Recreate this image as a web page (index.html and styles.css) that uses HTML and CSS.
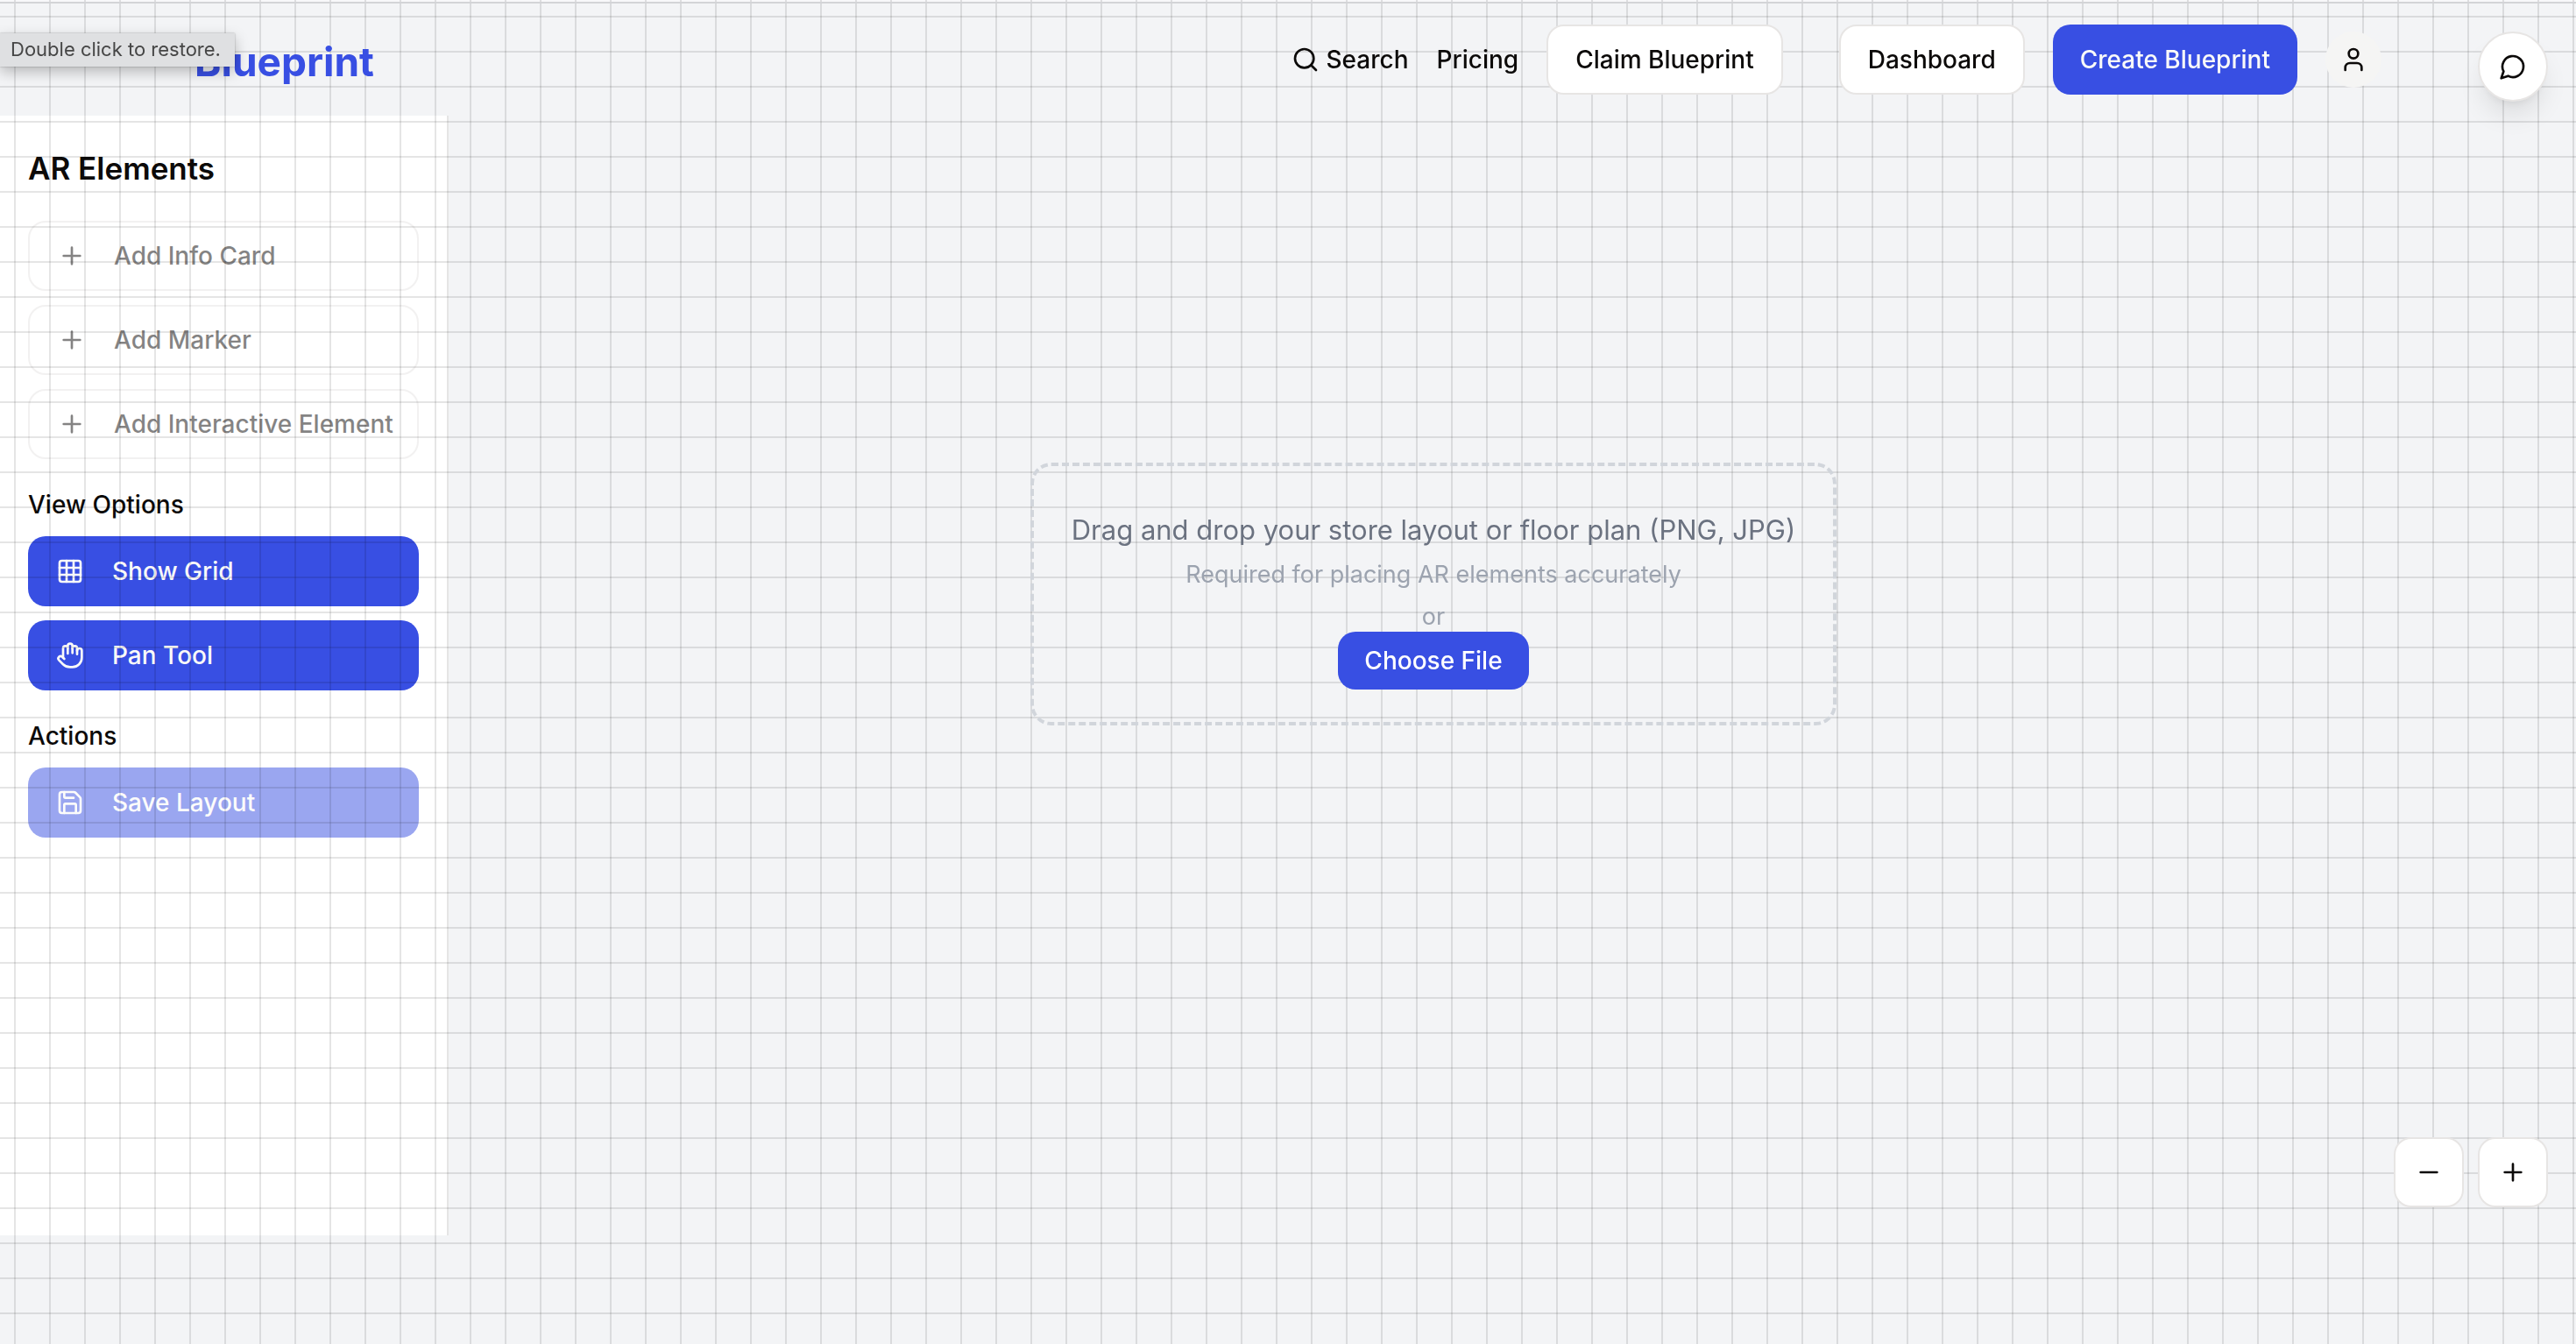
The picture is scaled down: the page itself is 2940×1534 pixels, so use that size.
FILE: index.html
```html
<!DOCTYPE html>
<html lang="en">
<head>
<meta charset="utf-8">
<meta name="viewport" content="width=device-width, initial-scale=1">
<title>Blueprint</title>
<link rel="stylesheet" href="styles.css">
</head>
<body>
<svg width="0" height="0" class="sprite" aria-hidden="true">
  <symbol id="plus" viewBox="0 0 24 24"><path d="M5 12h14M12 5v14"/></symbol>
  <symbol id="minus" viewBox="0 0 24 24"><path d="M5 12h14"/></symbol>
  <symbol id="search" viewBox="0 0 24 24"><circle cx="11" cy="11" r="8"/><path d="m21 21-4.300-4.300"/></symbol>
  <symbol id="user" viewBox="0 0 24 24"><path d="M19 21v-2a4 4 0 0 0-4-4H9a4 4 0 0 0-4 4v2"/><circle cx="12" cy="7" r="4"/></symbol>
  <symbol id="chat" viewBox="0 0 24 24"><path d="M7.900 20A9 9 0 1 0 4 16.100L2 22Z"/></symbol>
  <symbol id="grid" viewBox="0 0 24 24"><rect width="18" height="18" x="3" y="3" rx="2"/><path d="M3 9h18M3 15h18M9 3v18M15 3v18"/></symbol>
  <symbol id="hand" viewBox="0 0 24 24"><path d="M18 11V6a2 2 0 0 0-4 0"/><path d="M14 10V4a2 2 0 0 0-4 0v2"/><path d="M10 10.500V6a2 2 0 0 0-4 0v8"/><path d="M18 8a2 2 0 1 1 4 0v6a8 8 0 0 1-8 8h-2c-2.800 0-4.500-.860-5.990-2.340l-3.600-3.600a2 2 0 0 1 2.830-2.820L7 15"/></symbol>
  <symbol id="save" viewBox="0 0 24 24"><path d="M15.200 3a2 2 0 0 1 1.400.6l3.800 3.800a2 2 0 0 1 .6 1.400V19a2 2 0 0 1-2 2H5a2 2 0 0 1-2-2V5a2 2 0 0 1 2-2z"/><path d="M17 21v-7a1 1 0 0 0-1-1H8a1 1 0 0 0-1 1v7"/><path d="M7 3v4a1 1 0 0 0 1 1h7"/></symbol>
</svg>

<header class="header">
  <div class="header-inner">
    <a class="logo" href="#">Blueprint</a>
    <nav class="nav">
      <a class="nav-link" href="#"><svg class="icon"><use href="#search"/></svg>Search</a>
      <a class="nav-link" href="#">Pricing</a>
      <button class="btn btn-outline claim" type="button">Claim Blueprint</button>
      <button class="btn btn-outline" type="button">Dashboard</button>
      <button class="btn btn-primary" type="button">Create Blueprint</button>
      <button class="avatar" type="button" aria-label="Account"><svg class="icon"><use href="#user"/></svg></button>
    </nav>
  </div>
</header>

<div class="workspace">
  <aside class="sidebar">
    <section class="group">
      <h2 class="title">AR Elements</h2>
      <button class="btn btn-outline tool" type="button" disabled><svg class="icon"><use href="#plus"/></svg>Add Info Card</button>
      <button class="btn btn-outline tool" type="button" disabled><svg class="icon"><use href="#plus"/></svg>Add Marker</button>
      <button class="btn btn-outline tool" type="button" disabled><svg class="icon"><use href="#plus"/></svg>Add Interactive Element</button>
    </section>
    <section class="group">
      <h3 class="subtitle">View Options</h3>
      <button class="btn btn-primary tool" type="button"><svg class="icon"><use href="#grid"/></svg>Show Grid</button>
      <button class="btn btn-primary tool" type="button"><svg class="icon"><use href="#hand"/></svg>Pan Tool</button>
    </section>
    <section class="group">
      <h3 class="subtitle">Actions</h3>
      <button class="btn btn-primary tool" type="button" disabled><svg class="icon"><use href="#save"/></svg>Save Layout</button>
    </section>
  </aside>

  <main class="canvas">
    <div class="dropzone">
      <p class="drop-title">Drag and drop your store layout or floor plan (PNG, JPG)</p>
      <p class="drop-note">Required for placing AR elements accurately</p>
      <p class="drop-note">or</p>
      <div class="drop-action">
        <label class="choose" for="layout-file">Choose File</label>
        <input id="layout-file" type="file" accept="image/png,image/jpeg" hidden>
      </div>
    </div>
    <div class="zoom">
      <button class="btn btn-outline btn-icon" type="button" aria-label="Zoom out"><svg class="icon"><use href="#minus"/></svg></button>
      <button class="btn btn-outline btn-icon" type="button" aria-label="Zoom in"><svg class="icon"><use href="#plus"/></svg></button>
    </div>
  </main>
</div>

<div class="grid-overlay" aria-hidden="true"></div>
<button class="chat" type="button" aria-label="Open chat"><svg class="icon"><use href="#chat"/></svg></button>
<div class="tooltip" role="tooltip">Double click to restore.</div>
</body>
</html>
```
FILE: styles.css
```css
:root {
  --primary: #384fe3;
  --ink: #0c0a09;
  --line: #e7e5e4;
  --surface: #f3f4f6;
}

* { box-sizing: border-box; }

body {
  margin: 0;
  min-height: 100vh;
  background: var(--surface);
  border-top: 2px solid #f8f8fa;
  color: var(--ink);
  font: 400 28px/40px Inter, "Liberation Sans", sans-serif;
  display: flex;
  flex-direction: column;
}

h2, h3, p { margin: 0; }
button { font: inherit; color: inherit; cursor: pointer; }
a { color: inherit; text-decoration: none; }

.sprite { position: absolute; }

.icon {
  width: 32px;
  height: 32px;
  flex: none;
  fill: none;
  stroke: currentColor;
  stroke-width: 2;
  stroke-linecap: round;
  stroke-linejoin: round;
}

/* Header */
.header {
  position: relative;
  z-index: 2;
  border-top: 2px solid #d3d4d7;
}

.header-inner {
  max-width: 2560px;
  height: 128px;
  margin: 0 auto;
  padding: 0 32px;
  display: flex;
  align-items: center;
  justify-content: space-between;
}

.logo {
  padding-top: 4px;
  color: var(--primary);
  font-size: 46px;
  font-weight: 700;
  line-height: 64px;
}

.nav {
  display: flex;
  align-items: center;
  gap: 32px;
  font-weight: 500;
}

.nav .btn { padding: 0 31px; }

.nav-link {
  display: flex;
  align-items: center;
  gap: 8px;
}

.claim { margin-right: 32px; }

/* Buttons */
.btn {
  height: 80px;
  padding: 0 32px;
  border: 0;
  border-radius: 20px;
  font-weight: 500;
  white-space: nowrap;
}

.btn:disabled { opacity: 0.5; cursor: default; }

.btn-outline {
  background: #fff;
  border: 2px solid var(--line);
}

.btn-primary {
  background: var(--primary);
  color: #fafaf9;
}

.btn-icon {
  width: 80px;
  padding: 0;
  display: grid;
  place-items: center;
}

.avatar {
  width: 64px;
  height: 64px;
  padding: 0;
  border: 0;
  border-radius: 50%;
  background: #f5f5f4;
  display: grid;
  place-items: center;
}

/* Workspace */
.workspace {
  height: calc(100vh - 256px);
  min-height: 900px;
  display: flex;
}

.sidebar {
  width: 512px;
  flex: none;
  padding: 32px;
  background: #fff;
  border-right: 2px solid #e5e5e5;
  display: flex;
  flex-direction: column;
  gap: 32px;
}

.group {
  display: flex;
  flex-direction: column;
  gap: 16px;
}

.title {
  margin-bottom: 16px;
  font-size: 35px;
  font-weight: 600;
  line-height: 56px;
}

.subtitle {
  font-size: 28px;
  font-weight: 500;
}

.tool {
  display: flex;
  align-items: center;
  gap: 32px;
}

/* Lines are drawn over the sidebar and under the header and canvas controls */
.grid-overlay {
  position: fixed;
  inset: 0;
  z-index: 1;
  pointer-events: none;
  background-image:
    linear-gradient(rgba(0, 0, 0, 0.1) 2px, transparent 2px),
    linear-gradient(90deg, rgba(0, 0, 0, 0.1) 2px, transparent 2px);
  background-size: 40px 40px;
  background-position: 16px 18px;
}

.canvas {
  position: relative;
  z-index: 2;
  flex: 1;
  padding: 0 180px 186px 0;
  display: grid;
  place-items: center;
}

.dropzone {
  width: 920px;
  padding: 50px 0 48px;
  border: 4px dashed #d1d5db;
  border-radius: 24px;
  text-align: center;
  display: flex;
  flex-direction: column;
  gap: 8px;
}

.drop-title {
  color: #6b7280;
  font-size: 31px;
  line-height: 46px;
}

.drop-note {
  color: #9ca3af;
  font-size: 27px;
}

.drop-action { line-height: 44px; }

.choose {
  padding: 16px 30px;
  border-radius: 20px;
  background: var(--primary);
  color: #fff;
  font-weight: 500;
  cursor: pointer;
}

.zoom {
  position: absolute;
  right: 32px;
  bottom: 32px;
  display: flex;
  gap: 16px;
}

.chat {
  position: fixed;
  top: 36px;
  right: 32px;
  z-index: 3;
  width: 80px;
  height: 80px;
  padding: 0;
  border: 2px solid var(--line);
  border-radius: 50%;
  background: #fff;
  box-shadow: 0 20px 30px -6px rgba(0, 0, 0, 0.1), 0 8px 12px -8px rgba(0, 0, 0, 0.1);
  display: grid;
  place-items: center;
}

.tooltip {
  position: fixed;
  top: 38px;
  left: 0;
  z-index: 4;
  padding: 0 16px 2px 12px;
  background: #dfe0e2;
  color: #464646;
  font-size: 22px;
  line-height: 36px;
  box-shadow: 0 0 2px rgba(0, 0, 0, 0.3), 0 6px 16px rgba(0, 0, 0, 0.25);
}
```
